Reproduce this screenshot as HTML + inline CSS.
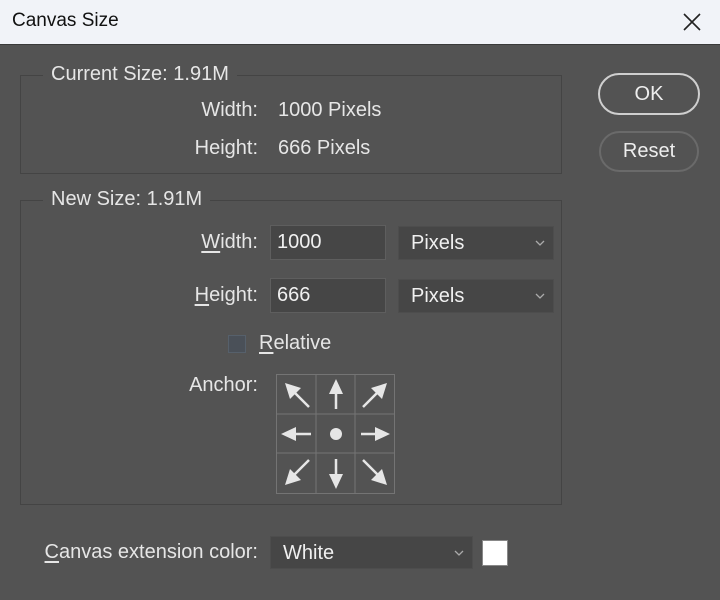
<!DOCTYPE html>
<html><head><meta charset="utf-8"><style>
*{margin:0;padding:0;box-sizing:border-box}
body{width:720px;height:600px;background:#535353;font-family:"Liberation Sans",sans-serif;font-size:20px;color:#e6e6e6;position:relative;overflow:hidden}
.a{position:absolute;white-space:nowrap}
.r{position:absolute;white-space:nowrap;right:462px}
.title{left:0;top:0;width:720px;height:45px;background:#f1f3f8;color:#111;border-bottom:1px solid #3a3a3a}
.box{border:1px solid #444;position:absolute}
.lbl{background:#535353;padding:0 8px}
.inp{background:#464646;border:1px solid #5e5e5e;position:absolute;padding-left:6px;line-height:33px;color:#f0f0f0}
.dd{background:#464646;border:1px solid #4d4d4d;position:absolute;padding-left:12px;line-height:33px;color:#f0f0f0}
.chev{position:absolute;right:8px;top:13px}
.btn{position:absolute;border:2px solid #cfcfcf;border-radius:22px;text-align:center;color:#eee}
u{text-decoration:underline;text-underline-offset:3px}
</style></head><body>
<div class="a title"><span class="a" style="left:12px;top:10px;font-size:19px">Canvas Size</span>
<svg class="a" style="left:682px;top:12px" width="20" height="20"><path d="M2 2L18 18M18 2L2 18" stroke="#222" stroke-width="1.6"/></svg></div>

<div class="box" style="left:20px;top:75px;width:542px;height:99px"></div>
<span class="a lbl" style="left:43px;top:63px">Current Size: 1.91M</span>
<span class="r" style="top:99px">Width:</span><span class="a" style="left:278px;top:99px">1000 Pixels</span>
<span class="r" style="top:137px">Height:</span><span class="a" style="left:278px;top:137px">666 Pixels</span>

<div class="btn" style="left:598px;top:73px;width:102px;height:42px;line-height:38px;font-size:20px">OK</div>
<div class="btn" style="left:599px;top:131px;width:100px;height:41px;line-height:37px;border-color:#6a6a6a">Reset</div>

<div class="box" style="left:20px;top:200px;width:542px;height:305px"></div>
<span class="a lbl" style="left:43px;top:188px">New Size: 1.91M</span>
<span class="r" style="top:231px"><u>W</u>idth:</span>
<div class="inp" style="left:270px;top:225px;width:116px;height:35px">1000</div>
<div class="dd" style="left:398px;top:226px;width:156px;height:34px">Pixels<svg class="chev" width="10" height="7"><path d="M1 1L5 5L9 1" stroke="#aaa" stroke-width="1.3" fill="none"/></svg></div>
<span class="r" style="top:284px"><u>H</u>eight:</span>
<div class="inp" style="left:270px;top:278px;width:116px;height:35px">666</div>
<div class="dd" style="left:398px;top:279px;width:156px;height:34px">Pixels<svg class="chev" width="10" height="7"><path d="M1 1L5 5L9 1" stroke="#aaa" stroke-width="1.3" fill="none"/></svg></div>
<div class="a" style="left:228px;top:335px;width:18px;height:18px;background:#4a5058;border:1px solid #56606b"></div>
<span class="a" style="left:259px;top:332px"><u>R</u>elative</span>
<span class="r" style="top:374px">Anchor:</span>
<svg class="a" style="left:275px;top:373px" width="121" height="122" viewBox="0 0 121 122">
<g stroke="#747474" stroke-width="1" fill="none">
<rect x="1.5" y="1.5" width="118" height="119"/>
<line x1="41" y1="1" x2="41" y2="121"/><line x1="80" y1="1" x2="80" y2="121"/>
<line x1="1" y1="41" x2="120" y2="41"/><line x1="1" y1="80" x2="120" y2="80"/>
</g>
<g stroke="#e6e6e6" stroke-width="2.5" fill="#e6e6e6">
<line x1="34" y1="34" x2="18" y2="18"/><polygon points="10,10 26,15 15,26" stroke="none"/>
<line x1="61" y1="36" x2="61" y2="16"/><polygon points="61,6 68,21 54,21" stroke="none"/>
<line x1="88" y1="34" x2="104" y2="18"/><polygon points="112,10 107,26 96,15" stroke="none"/>
<line x1="36" y1="61" x2="16" y2="61"/><polygon points="6,61 21,54 21,68" stroke="none"/>
<circle cx="61" cy="61" r="6" stroke="none"/>
<line x1="86" y1="61" x2="104" y2="61"/><polygon points="115,61 100,54 100,68" stroke="none"/>
<line x1="34" y1="87" x2="18" y2="103"/><polygon points="10,112 15,96 26,107" stroke="none"/>
<line x1="61" y1="86" x2="61" y2="104"/><polygon points="61,116 54,101 68,101" stroke="none"/>
<line x1="88" y1="87" x2="104" y2="103"/><polygon points="112,112 96,107 107,96" stroke="none"/>
</g></svg>

<span class="r" style="top:541px"><u>C</u>anvas extension color:</span>
<div class="dd" style="left:270px;top:536px;width:203px;height:33px;line-height:32px">White<svg class="chev" width="10" height="7"><path d="M1 1L5 5L9 1" stroke="#aaa" stroke-width="1.3" fill="none"/></svg></div>
<div class="a" style="left:482px;top:540px;width:26px;height:26px;background:#fff;border:1px solid #888"></div>
</body></html>
